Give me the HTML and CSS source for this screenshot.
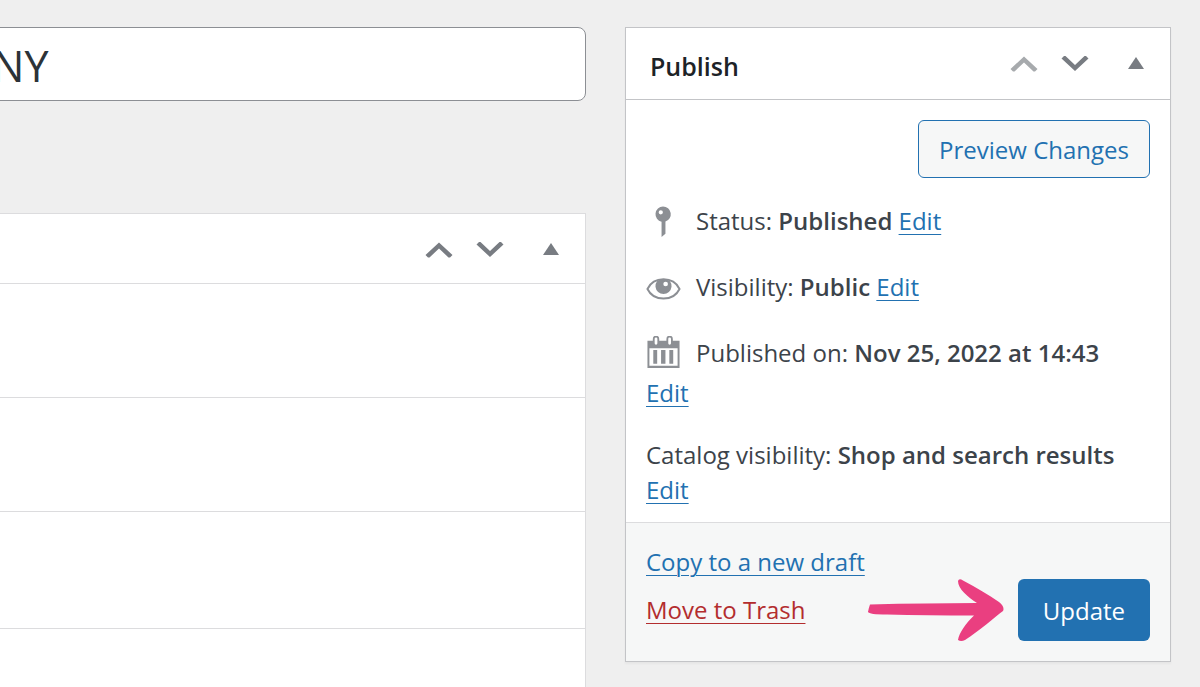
FILE: index.html
```html
<!DOCTYPE html>
<html lang="en">
<head>
<meta charset="utf-8">
<meta name="viewport" content="width=device-width, initial-scale=1">
<title>Edit product</title>
<link rel="stylesheet" href="styles.css">
</head>
<body>
<main class="page">
  <div class="main-column">
    <input class="title-input" type="text" value="NY" aria-label="Product name">
    <section class="panel" aria-label="Product data">
      <header class="panel-header">
        <div class="panel-actions">
          <button class="icon-button" type="button" aria-label="Move up"><svg class="chevron" viewBox="0 0 28 16"><path d="M14 .5 27.500 13 25 15.500H23.500L14 6.500 4.500 15.500H3L.5 13z"/></svg></button>
          <button class="icon-button" type="button" aria-label="Move down"><svg class="chevron" viewBox="0 0 28 16"><path d="M14 15 27.500 2.500 25 0H23.500L14 9 4.500 0H3L.5 2.500z"/></svg></button>
          <button class="icon-button toggle" type="button" aria-label="Toggle panel"><svg class="triangle" viewBox="0 0 16 12"><path d="M8 0 16 12H0z"/></svg></button>
        </div>
      </header>
      <div class="panel-row"></div>
      <div class="panel-row"></div>
      <div class="panel-row tall"></div>
      <div class="panel-row"></div>
    </section>
  </div>

  <aside class="side-column">
    <section class="publish-box">
      <header class="publish-header">
        <h2 class="publish-title">Publish</h2>
        <div class="panel-actions">
          <button class="icon-button" type="button" aria-label="Move up" disabled><svg class="chevron" viewBox="0 0 28 16"><path d="M14 .5 27.500 13 25 15.500H23.500L14 6.500 4.500 15.500H3L.5 13z"/></svg></button>
          <button class="icon-button" type="button" aria-label="Move down"><svg class="chevron" viewBox="0 0 28 16"><path d="M14 15 27.500 2.500 25 0H23.500L14 9 4.500 0H3L.5 2.500z"/></svg></button>
          <button class="icon-button toggle" type="button" aria-label="Toggle panel"><svg class="triangle" viewBox="0 0 16 12"><path d="M8 0 16 12H0z"/></svg></button>
        </div>
      </header>

      <div class="publish-body">
        <div class="preview-row"><button class="preview-button" type="button">Preview Changes</button></div>
        <div class="info-row">
          <svg class="info-icon" viewBox="0 0 36 36"><path fill-rule="evenodd" d="M17.500 2.500a8 8 0 0 1 2.500 15.600V30.500L16 34V18.300A8 8 0 0 1 17.500 2.500zM15.200 6.400a2.200 2.200 0 1 0 0 4.400 2.200 2.200 0 0 0 0-4.400z"/></svg>
          <p class="info-text">Status: <strong>Published</strong> <a href="#status">Edit</a></p>
        </div>
        <div class="info-row">
          <svg class="info-icon" viewBox="0 0 36 36"><path fill="none" stroke="#8c8f94" stroke-width="2" d="M1.500 19.500C8 6.300 28 6.300 34.500 19.500 28 32.700 8 32.700 1.500 19.500z"/><path fill-rule="evenodd" d="M11.300 11.500C15 9 21 9 24.700 11.500A8.300 8.300 0 1 1 11.300 11.500zM20.200 12a2.400 2.400 0 1 0 0 4.800 2.400 2.400 0 0 0 0-4.800z"/></svg>
          <p class="info-text">Visibility: <strong>Public</strong> <a href="#visibility">Edit</a></p>
        </div>
        <div class="info-row">
          <svg class="info-icon" viewBox="0 2 36 36"><path fill-rule="evenodd" d="M1.500 7H7V5a3.300 3.300 0 0 1 6.600 0v2H21V5a3.300 3.300 0 0 1 6.600 0v2H34.500v28H1.500zM10.300 3.500a1.400 1.400 0 0 0-1.400 1.400v4.600a1.400 1.400 0 0 0 2.800 0V4.900a1.400 1.400 0 0 0-1.400-1.400zm14 0a1.400 1.400 0 0 0-1.400 1.400v4.600a1.400 1.400 0 0 0 2.800 0V4.900a1.400 1.400 0 0 0-1.400-1.400zM3.500 14.500V32.500h29V14.500zM7.500 16.500h4V30.500h-4zm8 0h4.500V30.500h-4.500zm8.500 0h4V30.500h-4z"/></svg>
          <p class="info-text">Published on: <strong>Nov 25, 2022 at 14:43</strong></p>
        </div>
        <p class="edit-line"><a href="#date">Edit</a></p>
        <p class="catalog">Catalog visibility: <strong>Shop and search results</strong> <a class="catalog-edit" href="#catalog">Edit</a></p>
      </div>

      <footer class="publish-footer">
        <div class="footer-links">
          <a href="#copy">Copy to a new draft</a>
          <a class="trash" href="#trash">Move to Trash</a>
        </div>
        <svg class="arrow" viewBox="0 -2 138 64"><path d="M3 25.500Q60 24 110 24C101 18 91 10 91 2Q92-1 96 1.500C110 9 122 16 132 23Q138 28 136 32C128 38 112 52 98 61Q94 63 91 61C92 54 99 44 107 36.500Q60 36.500 20 35.500Q2 35.500 1 33Q2 28 3 25.500z"/></svg>
        <button class="update-button" type="submit">Update</button>
      </footer>
    </section>
  </aside>
</main>
</body>
</html>
```

FILE: styles.css
```css
* { box-sizing: border-box; }
body {
  margin: 0;
  background: #efefef;
  color: #3c434a;
  font-family: "Segoe UI", "Open Sans", "Noto Sans", sans-serif;
  font-size: 24px;
  line-height: 36px;
}
p, h2 { margin: 0; }
button, input { font: inherit; }
strong { font-weight: 600; }
a {
  color: #2271b1;
  text-decoration: underline;
  text-decoration-thickness: 1px;
  text-underline-offset: 4px;
}

.page {
  display: flex;
  gap: 39px;
  min-height: 100vh;
  padding: 27px 29px 0 0;
  overflow: hidden;
}
.main-column {
  display: flex;
  flex: 1;
  flex-direction: column;
  gap: 112px;
  min-width: 0;
  margin-left: -16px;
}
.title-input {
  width: 100%;
  height: 74px;
  padding: 2px 7px 0;
  border: 1px solid #8c8f94;
  border-radius: 8px;
  background: #fff;
  color: #2c3338;
  font-size: 43px;
}
.panel {
  flex: 1;
  border: 1px solid #dcdcde;
  border-bottom: 0;
  background: #fff;
}
.panel-header {
  display: flex;
  align-items: center;
  justify-content: flex-end;
  height: 70px;
  padding: 2px 26px 0;
  border-bottom: 1px solid #dcdcde;
}
.panel-row { height: 114px; border-bottom: 1px solid #dcdcde; }
.panel-row.tall { height: 117px; }
.panel-row:last-child { border-bottom: 0; height: 0; }

.panel-actions { display: flex; align-items: center; gap: 23px; }
.icon-button {
  display: flex;
  padding: 0;
  border: 0;
  background: none;
  color: #787c82;
}
.icon-button:disabled { color: #a7aaad; }
.toggle { margin-left: 16px; padding-bottom: 2px; }
.chevron { width: 28px; height: 16px; fill: currentColor; }
.triangle { width: 16px; height: 12px; fill: currentColor; }

.side-column { flex: 0 0 546px; }
.publish-box {
  border: 1px solid #c3c4c7;
  background: #fff;
  box-shadow: 0 2px 2px rgba(0, 0, 0, .04);
}
.publish-header {
  display: flex;
  align-items: center;
  justify-content: space-between;
  height: 72px;
  padding: 0 26px 0 24px;
  border-bottom: 1px solid #c3c4c7;
}
.publish-title {
  padding-top: 4px;
  color: #1d2327;
  font-size: 25px;
  font-weight: 600;
}
.publish-body { padding: 20px 20px 15px; }
.preview-row { display: flex; justify-content: flex-end; margin-bottom: 10px; }
.preview-button {
  height: 58px;
  padding: 2px 20px 0;
  border: 1px solid #2271b1;
  border-radius: 6px;
  background: #f6f7f7;
  color: #2271b1;
}
.info-row {
  display: flex;
  align-items: center;
  gap: 15px;
  min-height: 66px;
}
.info-icon { flex: none; width: 35px; height: 35px; fill: #8c8f94; }
.edit-line { margin: -11px 0 26px; }
.catalog { line-height: 35px; }
.catalog-edit { display: table; }

.publish-footer {
  display: flex;
  align-items: flex-end;
  padding: 21px 20px 20px;
  border-top: 1px solid #dcdcde;
  background: #f6f7f7;
}
.footer-links {
  display: flex;
  flex: 1;
  flex-direction: column;
  align-items: flex-start;
  gap: 12px;
  padding-bottom: 13px;
}
.trash { color: #b32d2e; }
.arrow { width: 138px; height: 64px; margin-right: 13px; fill: #ea3f80; }
.update-button {
  height: 62px;
  padding: 2px 25px 0;
  border: 0;
  border-radius: 6px;
  background: #2271b1;
  color: #fff;
}
```
